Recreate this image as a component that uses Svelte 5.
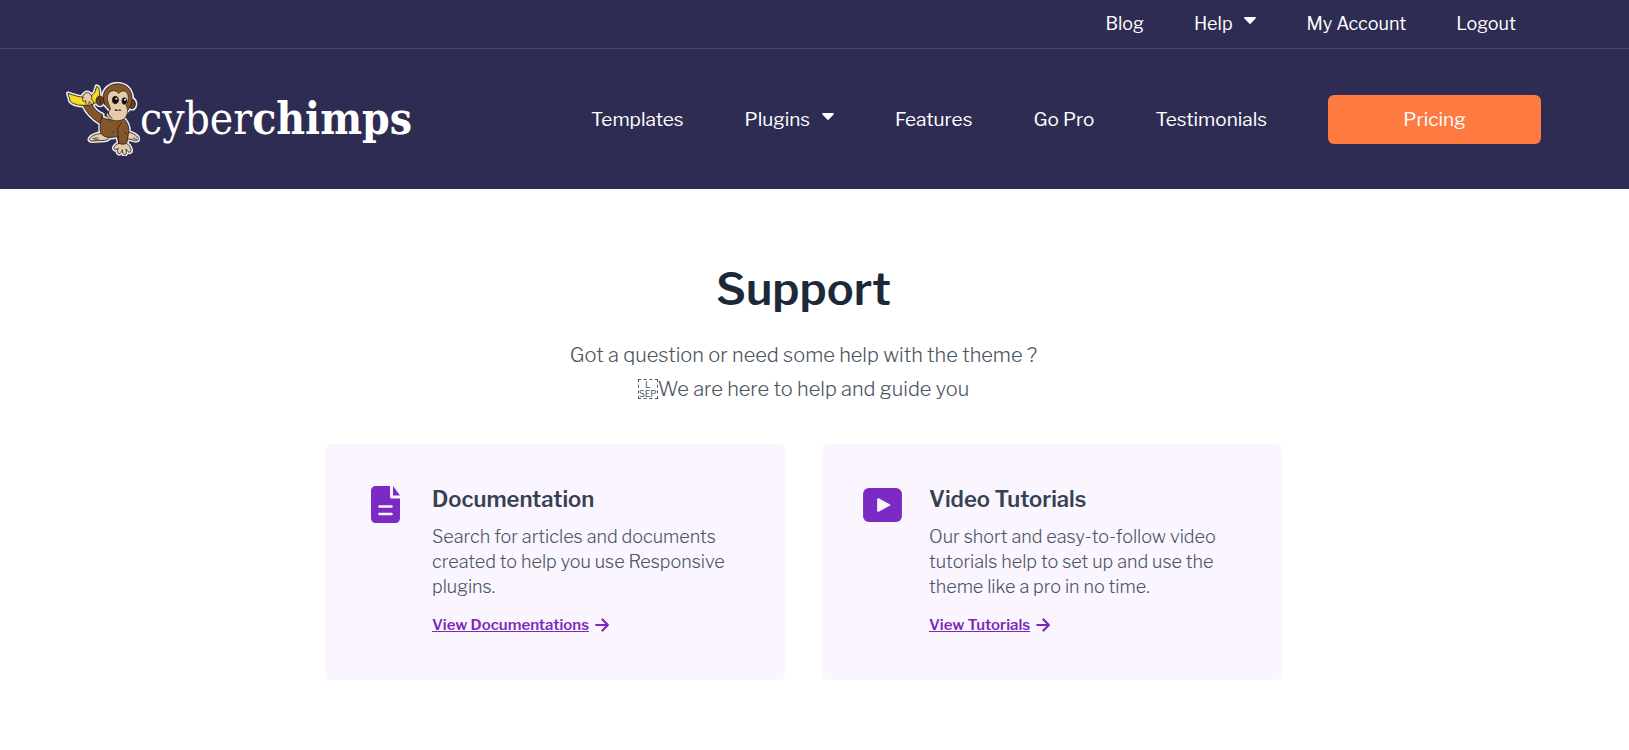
<script>
  const topLinks = [
    { label: 'Blog' },
    { label: 'Help', menu: true },
    { label: 'My Account' },
    { label: 'Logout' }
  ];
  const mainLinks = [
    { label: 'Templates' },
    { label: 'Plugins', menu: true },
    { label: 'Features' },
    { label: 'Go Pro' },
    { label: 'Testimonials' }
  ];
  const cards = [
    {
      icon: 'file',
      title: 'Documentation',
      text: 'Search for articles and documents created to help you use Responsive plugins.',
      link: 'View Documentations'
    },
    {
      icon: 'video',
      title: 'Video Tutorials',
      text: 'Our short and easy-to-follow video tutorials help to set up and use the theme like a pro in no time.',
      link: 'View Tutorials'
    }
  ];
</script>

{#snippet navLink(item)}
  <a href="#top">
    {item.label}
    {#if item.menu}
      <svg class="caret" viewBox="0 0 12 7" aria-hidden="true"><path d="M1 0h10c.8 0 1.200.8.600 1.400L6.800 6.600c-.4.5-1.200.5-1.600 0L.4 1.400C-.2.8.2 0 1 0z" /></svg>
    {/if}
  </a>
{/snippet}

<header>
  <nav class="top" aria-label="Account">
    {#each topLinks as item}{@render navLink(item)}{/each}
  </nav>
  <div class="bar">
    <a class="logo" href="#top">
      <svg class="chimp" viewBox="32 37 222 222" aria-hidden="true">
        <defs>
          <g id="chimp-body">
            <path fill="#85552b" d="M84 108l24-7c6 14 18 28 34 34l-4 28c-22-12-42-30-54-55z" />
            <path fill="#e4ccab" d="M139 192c-12-1-31 5-36 15-2 5 4 8 9 7l36-2c10-1 14-6 15-14z" />
            <path fill="#e4ccab" d="M215 186c13 2 30 10 34 20 1 6-7 8-13 6l-25-6z" />
            <path fill="#85552b" d="M139 143c-4 18-8 36-1 49 7 12 31 14 48 8l4 19c1 4 7 6 13 6 7 0 11-3 12-8l5-30c3-16-7-34-17-42-16 7-43 9-64-2z" />
            <path fill="#e4ccab" d="M190 221c-8 3-16 11-14 16 3 6 10 1 13-2-4 8-4 15 2 17 6 1 8-7 10-12 0 8 2 16 8 15 6-2 4-12 3-17 4 8 10 12 14 8 4-7-4-19-12-25-6 3-17 4-24 0z" />
            <path fill="#f8df25" d="M121 60l3-10 5 3c7 17 4 36-5 44-17 15-64 14-79-2L38 71c18 6 36 12 49 12 20-1 31-8 34-23z" />
            <ellipse cx="134" cy="93" rx="12" ry="14" fill="#6b4021" />
            <ellipse cx="231" cy="103" rx="9" ry="14" fill="#6b4021" />
            <path fill="#85552b" d="M148 103c-8-20-5-43 15-54 20-12 48-7 60 12 8 13 9 31 4 44-5 15-15 23-24 29-18 7-39-10-55-31z" />
            <path fill="#e4ccab" d="M82 82c1-9 12-17 20-11 7 3 8 12 7 18 5 5 8 11 5 14-5 4-10-6-12-8-1 5-1 12-6 11-5-1-4-8-5-13-5 3-8 3-9-1-2-5 4-8 0-10z" />
          </g>
        </defs>
        <use href="#chimp-body" stroke="#e9e9f2" stroke-width="12" stroke-linejoin="round" />
        <g stroke="#2b1c12" stroke-width="2.500" stroke-linejoin="round" stroke-linecap="round">
          <use href="#chimp-body" />
          <path fill="none" d="M187 176l3 43M187 176c3-8 7-12 12-15M209 190l5 3" />
          <path fill="#c89d14" stroke="none" d="M50 96c18 10 50 11 68 2-13 12-54 12-68-2zM124 55c5 13 3 25 0 35l4-15z" />
          <path fill="none" d="M129 88c6-4 10 7 6 14" />
          <path fill="#e4ccab" stroke-width="2" d="M161 105c-7-14-7-33 6-40 10-5 19 1 23 7 6-9 19-11 25-2 7 11 4 26-3 36 6 13 7 28-4 40-10 10-39 10-50-2-9-9-3-18 7-24z" />
          <ellipse cx="180" cy="91" rx="9" ry="11" fill="#0c0d10" />
          <ellipse cx="207" cy="94" rx="7" ry="10" fill="#0c0d10" />
          <circle cx="183" cy="87" r="3" fill="#fff" stroke="none" />
          <circle cx="209" cy="90" r="3" fill="#fff" stroke="none" />
          <path fill="none" stroke-width="4" d="M180 121l6 1M192 121l3 1" />
          <path fill="none" stroke-width="3" d="M159 129c1 7 5 13 11 17M155 130l6-3M172 188l1 0" />
          <path fill="none" stroke-width="2" d="M113 207l13-3M117 211l13-3M233 205l10 4" />
        </g>
      </svg>
      <span class="wordmark">cyber<b>chimps</b></span>
    </a>
    <nav class="main" aria-label="Main">
      {#each mainLinks as item}{@render navLink(item)}{/each}
      <a class="cta" href="#top">Pricing</a>
    </nav>
  </div>
</header>

<main>
  <h1>Support</h1>
  <p class="lead">
    Got a question or need some help with the theme ?<br />
    <span class="sep"><span>L</span><span>SEP</span></span>We are here to help and guide you
  </p>
  <div class="cards">
    {#each cards as card}
      <section class="card">
        <div class="icon">
          {#if card.icon === 'file'}
            <svg width="29" height="37" viewBox="0 0 29 37" aria-hidden="true">
              <path fill="#7b2ac4" d="M5 0h14v10.500c0 1.400.8 2 2 2h8V32c0 3-2 5-5 5H5c-3 0-5-2-5-5V5c0-3 2-5 5-5zM22 0l7 9.500h-7z" />
              <path stroke="#faf5ff" stroke-width="2.600" stroke-linecap="round" d="M8.500 20.500h12M8.500 28h12" />
            </svg>
          {:else}
            <svg width="39" height="34" viewBox="0 0 40 35" aria-hidden="true">
              <rect width="40" height="35" rx="6" fill="#7b2ac4" />
              <path fill="#faf5ff" stroke="#faf5ff" stroke-width="2" stroke-linejoin="round" d="M15.500 11.500v12l11.500-6z" />
            </svg>
          {/if}
        </div>
        <div class="body">
          <h2>{card.title}</h2>
          <p>{card.text}</p>
          <a href="#top">
            <span>{card.link}</span>
            <svg width="14" height="14" viewBox="0 0 14 14" aria-hidden="true"><path fill="none" stroke="#7b2ab8" stroke-width="2.200" stroke-linecap="round" stroke-linejoin="round" d="M1.200 7h11M7.500 1.500L12.800 7l-5.300 5.500" /></svg>
          </a>
        </div>
      </section>
    {/each}
  </div>
</main>

<style>
  :global(body) {
    margin: 0;
    background: #fff;
    font-family: 'Libre Franklin', Inter, sans-serif;
  }

  header {
    background: #2f2c53;
    color: #fff;
  }

  header a {
    color: inherit;
    text-decoration: none;
    white-space: nowrap;
  }

  nav {
    display: flex;
    align-items: center;
  }

  .top {
    box-sizing: border-box;
    justify-content: flex-end;
    gap: 50px;
    height: 49px;
    padding: 0 113px 2px 0;
    border-bottom: 1px solid #4b4870;
    font-size: 18px;
  }

  .bar {
    display: flex;
    align-items: center;
    justify-content: space-between;
    padding: 33px 88px 33px 66px;
  }

  .logo {
    display: flex;
    align-items: center;
  }

  .chimp {
    width: 74px;
    height: 74px;
  }

  .wordmark {
    font-family: 'DejaVu Serif Condensed', 'DejaVu Serif', serif;
    font-size: 44px;
    line-height: 48px;
  }

  .main {
    gap: 61px;
    font-size: 19px;
  }

  .caret {
    width: 12px;
    height: 7px;
    margin-left: 8px;
    vertical-align: 6px;
    fill: currentColor;
  }

  .cta {
    width: 213px;
    border-radius: 6px;
    background: #ff7a41;
    line-height: 49px;
    text-align: center;
  }

  main {
    padding: 72px 22px 70px 0;
    text-align: center;
  }

  h1 {
    margin: 0;
    color: #1d2939;
    font-size: 45px;
    font-weight: 600;
    line-height: 56px;
  }

  .lead {
    margin: 21px 0 38px;
    color: #4b5563;
    font-size: 20px;
    font-weight: 300;
    line-height: 34px;
  }

  .sep {
    display: inline-block;
    overflow: hidden;
    width: 18px;
    height: 18px;
    border: 1px dashed #4b5563;
    font-size: 9px;
    font-weight: 400;
    line-height: 9px;
    vertical-align: -3px;
  }

  .sep span {
    display: block;
  }

  .cards {
    display: flex;
    justify-content: center;
    gap: 37px;
  }

  .card {
    display: flex;
    box-sizing: border-box;
    width: 460px;
    padding: 40px 36px 42px 37px;
    border-radius: 6px;
    background: #faf5ff;
    text-align: left;
  }

  .icon {
    display: flex;
    flex: none;
    align-items: center;
    justify-content: center;
    width: 46px;
    height: 41px;
  }

  .body {
    flex: 1;
    padding-left: 24px;
  }

  h2 {
    margin: 0;
    color: #374151;
    font-size: 22px;
    font-weight: 600;
    line-height: 30px;
  }

  .body p {
    margin: 10px 0 13px;
    color: #4b5563;
    font-size: 18px;
    font-weight: 300;
    line-height: 25px;
  }

  .body a {
    display: inline-flex;
    align-items: center;
    gap: 6px;
    color: #7b2ab8;
    font-size: 15px;
    font-weight: 600;
    line-height: 26px;
    text-decoration: none;
  }

  .body a span {
    text-decoration: underline;
  }
</style>
